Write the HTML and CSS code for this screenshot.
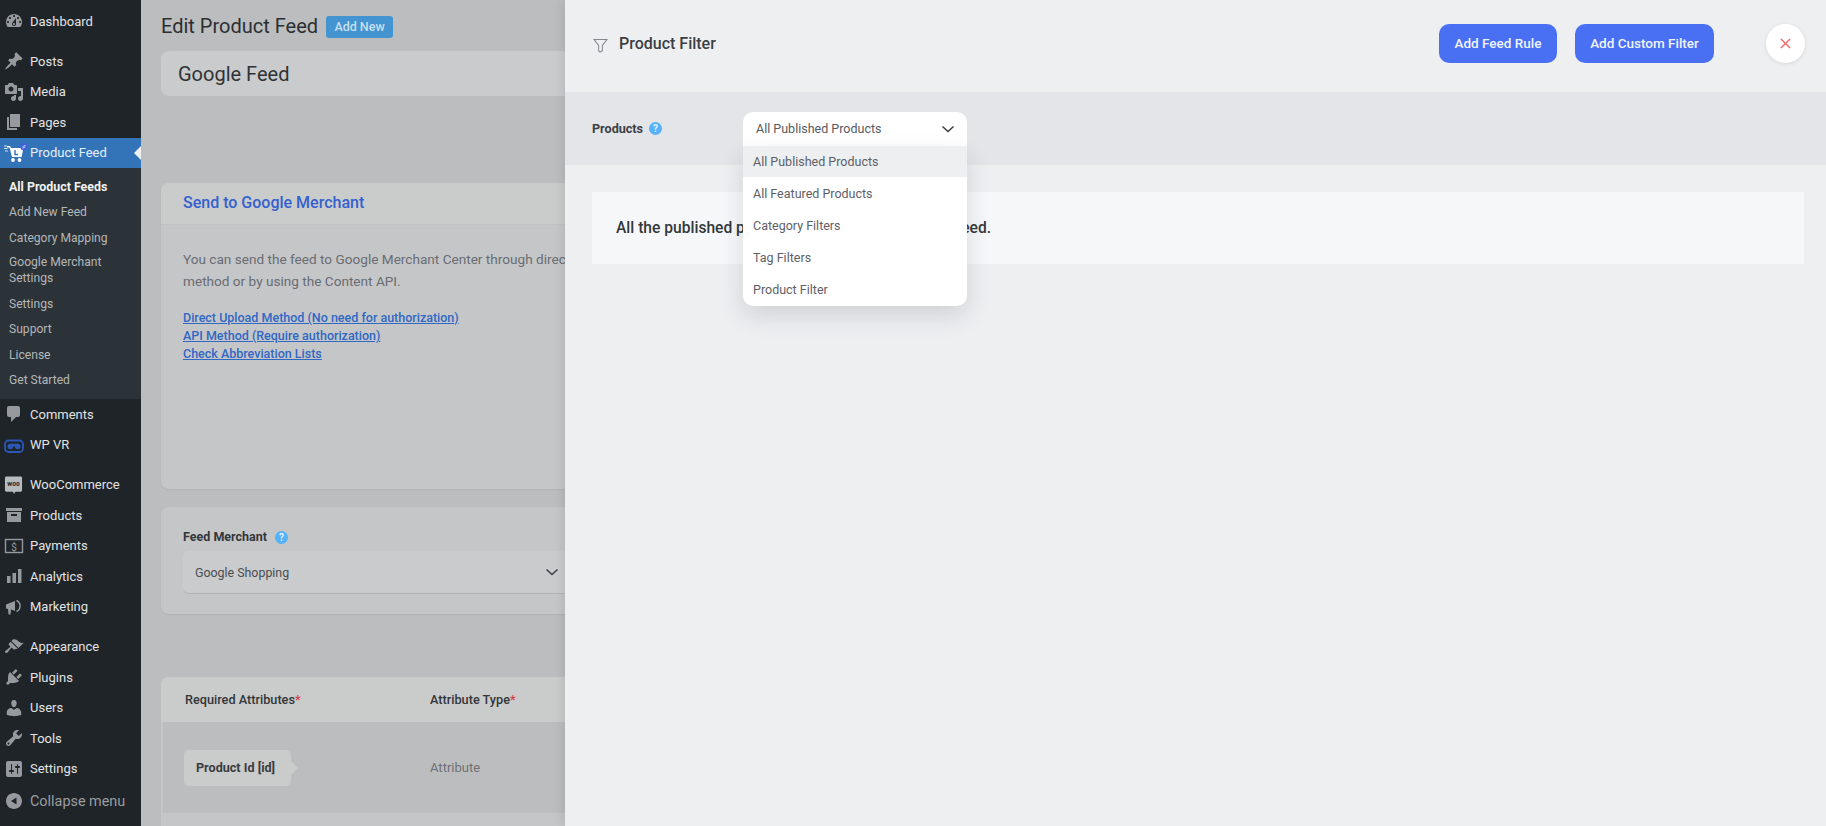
FILE: index.html
```html
<!DOCTYPE html>
<html lang="en">
<head>
<meta charset="utf-8">
<title>Edit Product Feed</title>
<link rel="stylesheet" href="styles.css">
</head>
<body>
<div class="app">
  <nav class="sidebar">
    <ul class="menu group-first">
      <li class="item"><svg class="ic" viewBox="0 0 20 20"><path d="M3.76 16h12.48c1.1-1.37 1.76-3.11 1.76-5 0-4.42-3.58-8-8-8s-8 3.58-8 8c0 1.89.66 3.63 1.76 5zM10 4c.55 0 1 .45 1 1s-.45 1-1 1-1-.45-1-1 .45-1 1-1zM6 6c.55 0 1 .45 1 1s-.45 1-1 1-1-.45-1-1 .45-1 1-1zm8 0c.55 0 1 .45 1 1s-.45 1-1 1-1-.45-1-1 .45-1 1-1zm-5.37 5.55L12 7v6c0 1.1-.9 2-2 2s-2-.9-2-2c0-.57.24-1.08.63-1.45zM4 10c.55 0 1 .45 1 1s-.45 1-1 1-1-.45-1-1 .45-1 1-1zm12 0c.55 0 1 .45 1 1s-.45 1-1 1-1-.45-1-1 .45-1 1-1zm-5 3c0-.55-.45-1-1-1s-1 .45-1 1 .45 1 1 1 1-.45 1-1z"/></svg>Dashboard</li>
    </ul>
    <ul class="menu group">
      <li class="item"><svg class="ic" viewBox="0 0 20 20"><path d="M10.44 3.02l1.82-1.82 6.36 6.35-1.83 1.82c-1.05-.68-2.48-.57-3.41.36l-.75.75c-.92.93-1.04 2.35-.35 3.41l-1.83 1.82-2.41-2.41-2.8 2.79c-.42.42-3.38 2.71-3.8 2.29s1.86-3.39 2.28-3.81l2.79-2.79L4.1 9.36l1.83-1.82c1.05.69 2.48.57 3.4-.36l.75-.75c.93-.92 1.05-2.35.36-3.41z"/></svg>Posts</li>
      <li class="item"><svg class="ic" viewBox="0 0 20 20"><path d="M13 11V4c0-.55-.45-1-1-1h-1.67L9 1H5L3.67 3H2c-.55 0-1 .45-1 1v7c0 .55.45 1 1 1h10c.55 0 1-.45 1-1zM7 4.500c1.380 0 2.500 1.120 2.500 2.500S8.380 9.500 7 9.500 4.500 8.380 4.500 7 5.620 4.500 7 4.500zM14 6h5v10.500c0 1.380-1.120 2.500-2.500 2.500S14 17.880 14 16.500s1.120-2.500 2.500-2.500c.17 0 .34.02.5.05V9h-3V6zm-4 8.050V13h2v3.500c0 1.380-1.120 2.500-2.500 2.500S7 17.880 7 16.500 8.120 14 9.500 14c.17 0 .34.02.5.05z"/></svg>Media</li>
      <li class="item"><svg class="ic" viewBox="0 0 20 20"><path d="M6 15V2h10v13H6zm-1 1h8v2H3V5h2v11z"/></svg>Pages</li>
      <li class="item current">
        <svg class="ic ic-feed" viewBox="0 0 24 20"><path d="M0 3h3M0 5.500h3.500M1 8h3" stroke="#cfe0f0" stroke-width="1" fill="none"/><path d="M3 3h3l1 2h12.500l-2 9H8L5.500 4.500H3z" fill="#fff"/><circle cx="9" cy="17" r="1.900" fill="#fff"/><circle cx="15.500" cy="17" r="1.900" fill="#fff"/><path d="M11 7v4.500h3" stroke="#3373b7" stroke-width="1.400" fill="none"/><circle cx="20" cy="3.800" r="3.700" fill="#3f62d8"/><path d="M18.500 3.800l3-1.500M18.500 5.300l3-1.500" stroke="#fff" stroke-width=".7"/></svg>Product Feed<span class="notch"></span>
      </li>
    </ul>
    <ul class="submenu">
      <li class="sub active">All Product Feeds</li>
      <li class="sub">Add New Feed</li>
      <li class="sub">Category Mapping</li>
      <li class="sub sub-two">Google Merchant Settings</li>
      <li class="sub">Settings</li>
      <li class="sub">Support</li>
      <li class="sub">License</li>
      <li class="sub">Get Started</li>
    </ul>
    <ul class="menu">
      <li class="item"><svg class="ic" viewBox="0 0 20 20"><path d="M5 2h9c1.100 0 2 .9 2 2v7c0 1.100-.9 2-2 2h-2l-5 5v-5H5c-1.100 0-2-.9-2-2V4c0-1.100.9-2 2-2z"/></svg>Comments</li>
      <li class="item"><svg class="ic ic-vr" viewBox="0 0 20 20"><rect x="1" y="4.500" width="18" height="11.500" rx="3.500" fill="none" stroke="#2b57b8" stroke-width="1.800"/><circle cx="6.300" cy="10.500" r="2.800" fill="#2b57b8"/><circle cx="13.700" cy="10.500" r="2.800" fill="#2b57b8"/><rect x="6.300" y="7.700" width="7.400" height="2.800" fill="#2b57b8"/></svg>WP VR</li>
    </ul>
    <ul class="menu group">
      <li class="item"><svg class="ic ic-woo" viewBox="0 0 20 20"><path d="M2.500 1h15A1.500 1.500 0 0 1 19 2.500v13a1.500 1.500 0 0 1-1.500 1.500H12l-1.500 2.500-1-2.500h-7A1.500 1.500 0 0 1 1 15.500v-13A1.500 1.500 0 0 1 2.500 1z"/><text x="10" y="11.500" class="woo-mark">woo</text></svg>WooCommerce</li>
      <li class="item"><svg class="ic" viewBox="0 0 20 20"><path d="M2 3h16v3H2zM3 7h14v10H3zm4 2v2h6V9z" fill-rule="evenodd"/></svg>Products</li>
      <li class="item"><svg class="ic ic-pay" viewBox="0 0 20 20"><rect x="1.500" y="3.500" width="17" height="13" fill="none" stroke="#96999d" stroke-width="1.400"/><text x="10" y="14.500" class="pay-mark">$</text></svg>Payments</li>
      <li class="item"><svg class="ic" viewBox="0 0 20 20"><path d="M3 10h3.500v7H3zM8.500 7H12v10H8.500zM14 3h3.500v14H14z"/></svg>Analytics</li>
      <li class="item"><svg class="ic" viewBox="0 0 20 20"><path d="M2 7.500l9-3.500v10l-4-1.500-.5 5H4.500L4 12 2 11.500z"/><path d="M12.500 3.500a6 6 0 0 1 0 11" fill="none" stroke="#96999d" stroke-width="1.400"/></svg>Marketing</li>
    </ul>
    <ul class="menu group">
      <li class="item"><svg class="ic" viewBox="0 0 20 20"><path d="M14.480 11.060L7.410 3.990l1.500-1.500c.5-.56 2.300-.47 3.510.32 1.210.8 1.430 1.280 2.910 2.100 1.180.64 2.450 1.260 4.450.85zm-.71.71L6.700 4.700 4.930 6.470c-.39.39-.39 1.020 0 1.410l1.060 1.060c.39.39.39 1.030 0 1.420-.6.6-1.430 1.110-2.210 1.690-.35.26-.7.53-1.010.84C1.430 13.230.4 14.750 1.400 15.700s2.500-.1 3.020-1.350c.31-.31.58-.66.84-1.010.58-.78 1.090-1.610 1.690-2.210.39-.39 1.020-.39 1.410 0l1.060 1.060c.39.39 1.020.39 1.410 0z"/></svg>Appearance</li>
      <li class="item"><svg class="ic" viewBox="0 0 20 20"><path d="M13.110 4.360L9.870 7.600 8 5.730l3.240-3.240c.35-.34 1.050-.2 1.560.32.52.51.66 1.210.31 1.550zm-8 1.770l.91-1.120 9.010 9.010-1.190.84c-.71.71-2.630 1.160-3.820 1.160H6.140L4.900 17.260c-.59.59-1.540.59-2.120 0-.59-.58-.59-1.530 0-2.120l1.240-1.240v-3.880c0-1.130.4-3.190 1.090-3.890zm7.260 3.970l3.240-3.240c.34-.35 1.040-.21 1.550.31.52.51.66 1.210.31 1.550l-3.240 3.250z"/></svg>Plugins</li>
      <li class="item"><svg class="ic" viewBox="0 0 20 20"><path d="M10 9.250c-2.270 0-2.730-3.440-2.730-3.440C7 4.020 7.820 2 9.970 2c2.160 0 2.980 2.020 2.710 3.810 0 0-.41 3.440-2.680 3.440zm0 2.570L12.720 10c2.390 0 4.520 2.330 4.520 4.530v2.490s-3.650 1.130-7.240 1.130c-3.650 0-7.240-1.130-7.240-1.130v-2.490c0-2.250 1.940-4.480 4.470-4.480z"/></svg>Users</li>
      <li class="item"><svg class="ic" viewBox="0 0 20 20"><path d="M16.680 9.770c-1.340 1.340-3.300 1.670-4.950.99l-5.410 6.520c-.99.99-2.590.99-3.580 0s-.99-2.590 0-3.570l6.520-5.420c-.68-1.650-.35-3.610.99-4.950 1.280-1.280 3.120-1.620 4.720-1.060l-2.890 2.890 2.820 2.820 2.860-2.870c.53 1.580.18 3.390-1.080 4.650zM3.810 16.210c.4.39 1.040.39 1.430 0 .4-.4.4-1.040 0-1.430-.39-.4-1.030-.4-1.430 0-.39.39-.39 1.030 0 1.430z"/></svg>Tools</li>
      <li class="item"><svg class="ic" viewBox="0 0 20 20"><path d="M18 16V4c0-1.100-.9-2-2-2H4c-1.100 0-2 .9-2 2v12c0 1.100.9 2 2 2h12c1.100 0 2-.9 2-2zM8 11h1c.55 0 1 .45 1 1s-.45 1-1 1H8v1.500c0 .28-.22.5-.5.5s-.5-.22-.5-.5V13H6c-.55 0-1-.45-1-1s.45-1 1-1h1V5.500c0-.28.22-.5.5-.5s.5.22.5.5V11zm5-2h-1c-.55 0-1-.45-1-1s.45-1 1-1h1V5.500c0-.28.22-.5.5-.5s.5.22.5.5V7h1c.55 0 1 .45 1 1s-.45 1-1 1h-1v5.500c0 .28-.22.5-.5.5s-.5-.22-.5-.5V9z"/></svg>Settings</li>
      <li class="item collapse"><svg class="ic" viewBox="0 0 20 20"><path d="M18 10c0-4.420-3.580-8-8-8s-8 3.580-8 8 3.580 8 8 8 8-3.580 8-8zm-5.500-3.500v7L7 10z" fill-rule="evenodd"/></svg>Collapse menu</li>
    </ul>
  </nav>

  <main class="main">
    <div class="page-head">
      <h1 class="page-title">Edit Product Feed</h1>
      <span class="add-new">Add New</span>
    </div>
    <div class="name-input">Google Feed</div>

    <section class="card send-card">
      <h2 class="card-title">Send to Google Merchant</h2>
      <div class="card-body">
        <p class="card-text">You can send the feed to Google Merchant Center through direct upload<br>method or by using the Content API.</p>
        <div class="links">
          <a class="link">Direct Upload Method (No need for authorization)</a>
          <a class="link">API Method (Require authorization)</a>
          <a class="link">Check Abbreviation Lists</a>
        </div>
      </div>
    </section>

    <section class="card merchant-card">
      <div class="field-label">Feed Merchant <span class="help help-merchant">?</span></div>
      <div class="bg-select">
        <span>Google Shopping</span>
        <svg class="chev" viewBox="0 0 14 8"><path d="M1.500 1.500L7 6.500l5.500-5"/></svg>
      </div>
    </section>

    <section class="attr-table">
      <div class="attr-head">
        <div class="col-a">Required Attributes<span class="req">*</span></div>
        <div class="col-b">Attribute Type<span class="req">*</span></div>
      </div>
      <div class="attr-row">
        <div class="col-a"><span class="attr-tag">Product Id [id]</span></div>
        <div class="col-b attr-type">Attribute</div>
      </div>
    </section>
  </main>

  <aside class="panel">
    <header class="panel-head">
      <svg class="filter-ic" viewBox="0 0 16 16"><path d="M1 1.500h14L10 8v5.500L7.500 15 6 13.800V8z"/></svg>
      <h2 class="panel-title">Product Filter</h2>
      <div class="panel-actions">
        <button class="btn btn-rule">Add Feed Rule</button>
        <button class="btn btn-custom">Add Custom Filter</button>
        <button class="close" aria-label="Close"><svg viewBox="0 0 12 12"><path d="M1 1l10 10M11 1L1 11"/></svg></button>
      </div>
    </header>
    <div class="filter-row">
      <div class="filter-label">Products <span class="help">?</span></div>
      <div class="filter-select">
        <span class="select-value">All Published Products</span>
        <svg class="chev" viewBox="0 0 14 8"><path d="M1.500 1.500L7 6.500l5.500-5"/></svg>
        <ul class="dropdown">
          <li class="opt opt-on">All Published Products</li>
          <li class="opt">All Featured Products</li>
          <li class="opt">Category Filters</li>
          <li class="opt">Tag Filters</li>
          <li class="opt">Product Filter</li>
        </ul>
      </div>
    </div>
    <div class="panel-body">
      <div class="info-box">All the published products will be included in the feed.</div>
    </div>
  </aside>
</div>
</body>
</html>
```

FILE: styles.css
```css
* { box-sizing: border-box; }
html, body { margin: 0; height: 826px; overflow: hidden; }
body { font-family: Roboto, "Liberation Sans", sans-serif; color: #2c3033; background: #bcbdbf; }
ul { list-style: none; margin: 0; padding: 0; }
h1, h2, p { margin: 0; }

.app { display: flex; height: 826px; position: relative; overflow: hidden; }

/* Sidebar */
.sidebar { width: 141px; flex: none; background: #1f2428; padding-top: 6px; color: #e1e3e4; font-size: 13px; }
.group { margin-top: 9.500px; }
.item { height: 30.500px; display: flex; align-items: center; position: relative; }
.ic { width: 20px; height: 20px; margin: 0 6px 0 4px; flex: none; fill: #96999d; }
.ic-feed { width: 24px; margin: 0 2px 0 4px; }
.ic-vr { margin: 3px 6px 0 4px; }
.ic-woo { width: 19px; height: 20px; margin: 0 7px 0 4px; fill: #b8bbbe; }
.woo-mark { font-size: 7px; font-weight: 700; text-anchor: middle; fill: #1f2428; font-family: Roboto, sans-serif; }
.pay-mark { font-size: 10px; text-anchor: middle; fill: #96999d; font-family: Roboto, sans-serif; }
.current { background: #3373b7; color: #e8f0f7; }
.notch { position: absolute; right: 0; top: 50%; margin-top: -7px; border: 7px solid transparent; border-right-color: #eef0f1; border-left-width: 0; }
.collapse { color: #9a9da1; margin-top: 2px; font-size: 14.400px; }
.submenu { background: #2c3338; padding: 6.200px 0 6px; height: 231px; font-size: 12.100px; color: #b4b7ba; }
.sub { height: 25.500px; padding-left: 9px; display: flex; align-items: center; }
.sub-two { height: 40.500px; line-height: 15.500px; padding-right: 20px; }
.active { color: #f0f1f1; font-weight: 700; font-size: 12.400px; }

/* Main (dimmed page behind the drawer) */
.main { flex: 1; min-width: 0; padding: 16px 21px 0 20px; background: #bcbdbf; }
.page-head { display: flex; align-items: center; gap: 8px; height: 21px; }
.page-title { font-size: 20px; font-weight: 400; color: #2b2f32; line-height: 21px; }
.add-new { background: #4394d0; color: #c7dff0; font-size: 12.500px; font-weight: 500; width: 67px; height: 22px; border-radius: 3px; display: flex; align-items: center; justify-content: center; }
.name-input { margin-top: 14px; height: 45px; background: #cacbcc; border-radius: 8px; padding: 2px 0 0 17px; font-size: 20px; line-height: 43px; color: #2f3336; }
.card { background: #c5c6c8; border-radius: 8px; box-shadow: 0 1px 2px rgba(0,0,0,.06); }
.send-card { margin-top: 87px; height: 306px; }
.card-title { height: 42px; background: #cacbcb; border-bottom: 1px solid #c1c2c4; border-radius: 8px 8px 0 0; padding-left: 22px; font-size: 16px; font-weight: 500; line-height: 39px; color: #3461ce; }
.card-body { padding: 23px 22px 0 22px; }
.card-text { font-size: 13.600px; line-height: 22px; color: #696d73; }
.links { margin-top: 17px; display: flex; flex-direction: column; align-items: flex-start; }
.link { font-size: 12.500px; font-weight: 500; line-height: 18px; color: #3168c4; text-decoration: underline; }
.merchant-card { margin-top: 18px; height: 107px; padding: 21px 22px 0 22px; }
.field-label { font-size: 12.500px; font-weight: 700; line-height: 18px; color: #34373b; display: flex; align-items: center; gap: 8px; }
.help { width: 13px; height: 13px; border-radius: 50%; background: #55b2f7; color: #e6f3fd; font-size: 10px; font-weight: 700; line-height: 13px; text-align: center; display: inline-block; }
.bg-select { margin-top: 5px; height: 43px; background: #cacbcc; border-bottom: 1px solid #b3b4b6; border-radius: 6px; padding: 0 12px; font-size: 12.400px; color: #4b4e52; display: flex; align-items: center; }
.bg-select span { width: 350px; }
.chev { width: 14px; height: 8px; fill: none; stroke: #3c4044; stroke-width: 1.600px; }
.attr-table { margin-top: 63px; height: 149px; background: #c5c6c8; border-radius: 8px 8px 0 0; padding: 0 0 0 2px; }
.attr-head { height: 45px; background: #cacbcb; margin-left: -2px; padding-left: 2px; border-radius: 8px 8px 0 0; display: flex; align-items: center; font-size: 12.700px; font-weight: 500; color: #33363a; }
.attr-row { height: 91px; background: #bcbdbf; display: flex; align-items: center; font-size: 13px; }
.col-a { width: 267px; padding-left: 22px; flex: none; }
.req { color: #d8404a; }
.attr-tag { position: relative; display: inline-flex; align-items: center; width: 107px; height: 36px; padding-left: 12px; margin-left: -1px; background: #cacbcb; border-radius: 5px; font-size: 12.600px; font-weight: 700; color: #3a3d41; }
.attr-tag::after { content: ""; position: absolute; left: 100%; top: 11px; border: 7px solid transparent; border-left-color: #cacbcb; border-right-width: 0; }
.attr-type { color: #6e7175; }

/* Drawer */
.panel { position: absolute; left: 565px; top: 0; right: 0; bottom: 0; background: #eeeff1; box-shadow: -4px 0 8px rgba(0,0,0,.07); }
.panel-head { height: 92px; display: flex; align-items: center; padding: 0 21px 6px 28px; }
.filter-ic { width: 15px; height: 15px; margin-top: 4px; fill: none; stroke: #85888d; stroke-width: 1.100px; flex: none; }
.panel-title { margin-left: 11px; font-size: 16px; font-weight: 500; color: #3b3f44; }
.panel-actions { margin-left: auto; display: flex; align-items: center; }
.btn { height: 39px; padding: 0; margin-left: 18px; background: #4970f3; color: #f0f4fe; border: 0; border-radius: 10px; font: 500 13.500px Roboto, sans-serif; }
.btn-rule { width: 118px; }
.btn-custom { width: 139px; }
.close { width: 39px; height: 39px; margin-left: 52px; border: 0; padding: 0; border-radius: 50%; background: #fff; box-shadow: 0 1px 4px rgba(0,0,0,.1); display: flex; align-items: center; justify-content: center; }
.close svg { width: 11px; height: 11px; fill: none; stroke: #f26a6a; stroke-width: 1.600px; }
.filter-row { height: 73px; background: #e4e5e9; display: flex; align-items: center; padding: 0 0 0 27px; }
.filter-label { width: 151px; font-size: 12.600px; font-weight: 700; color: #3b3f44; display: flex; align-items: center; gap: 6px; flex: none; }
.filter-label .help { margin-top: -1px; }
.filter-select { position: relative; width: 224px; height: 34px; margin-top: 1px; background: #fff; border-radius: 10px 10px 0 0; padding: 0 12px 0 13px; display: flex; align-items: center; justify-content: space-between; font-size: 12.500px; color: #565a60; }
.select-value { margin-top: -2px; }
.dropdown { position: absolute; left: 0; right: 0; top: 34px; z-index: 2; background: #fff; border-radius: 0 0 10px 10px; box-shadow: 0 10px 24px rgba(30,35,50,.14); }
.opt { height: 32.200px; padding-left: 10px; display: flex; align-items: center; color: #5d6167; }
.opt-on { height: 31px; background: #eeeff1; }
.panel-body { padding: 27px 22px 0 27px; }
.info-box { height: 72px; background: #f6f7f9; padding-left: 24px; font-size: 15.600px; font-weight: 500; line-height: 72px; color: #33373b; }
```
